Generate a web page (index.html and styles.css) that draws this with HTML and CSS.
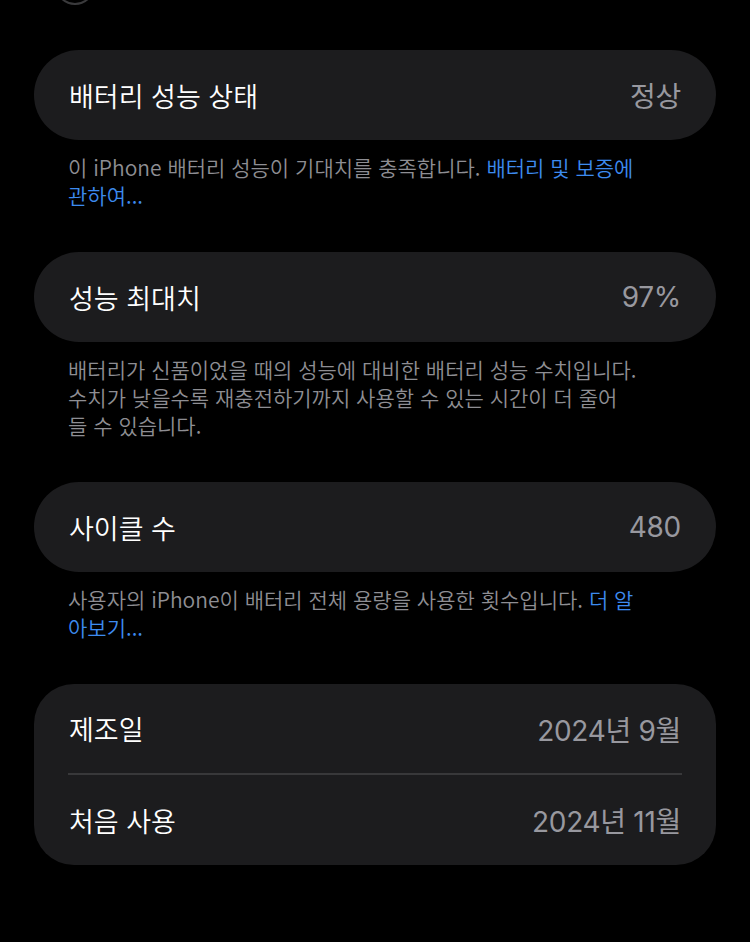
FILE: index.html
```html
<!DOCTYPE html>
<html lang="ko">
<head>
<meta charset="utf-8">
<link rel="stylesheet" href="styles.css">
</head>
<body>
<div class="page">
  <div class="top"><div class="top-circle"></div></div>

  <div class="card">
    <div class="row"><span class="label">배터리 성능 상태</span><span class="value">정상</span></div>
  </div>
  <p class="note">이 iPhone 배터리 성능이 기대치를 충족합니다. <span class="link">배터리 및 보증에<br>관하여...</span></p>

  <div class="card">
    <div class="row"><span class="label">성능 최대치</span><span class="value">97%</span></div>
  </div>
  <p class="note">배터리가 신품이었을 때의 성능에 대비한 배터리 성능 수치입니다.<br>수치가 낮을수록 재충전하기까지 사용할 수 있는 시간이 더 줄어<br>들 수 있습니다.</p>

  <div class="card">
    <div class="row"><span class="label">사이클 수</span><span class="value">480</span></div>
  </div>
  <p class="note">사용자의 iPhone이 배터리 전체 용량을 사용한 횟수입니다. <span class="link">더 알<br>아보기...</span></p>

  <div class="card card-group">
    <div class="row"><span class="label">제조일</span><span class="value">2024년 9월</span></div>
    <div class="divider"></div>
    <div class="row"><span class="label">처음 사용</span><span class="value">2024년 11월</span></div>
  </div>
</div>
</body>
</html>
```

FILE: styles.css
```css
html, body {
  margin: 0;
  padding: 0;
  background: #000;
}
body {
  font-family: "Noto Sans CJK KR", "Noto Sans", sans-serif;
  font-weight: 350;
  color: #fff;
  width: 750px;
  height: 942px;
  overflow: hidden;
}
.page {
  padding: 0 34px;
}
.top {
  height: 50px;
  overflow: hidden;
}
.top-circle {
  width: 36px;
  height: 36px;
  margin-top: -35px;
  margin-left: 21px;
  border-radius: 50%;
  border: 2px solid #3a3a3c;
}
.card {
  background: #1c1c1e;
  border-radius: 45px;
}
.card-group {
  border-radius: 40px;
}
.row {
  height: 90px;
  display: flex;
  align-items: center;
  justify-content: space-between;
  padding: 0 35px;
}
.label {
  font-size: 27px;
  color: #fff;
}
.value {
  font-family: "Inter", "Noto Sans CJK KR", sans-serif;
  font-size: 28px;
  font-weight: 400;
  letter-spacing: -0.3px;
  color: #98989f;
}
.divider {
  height: 2px;
  background: #38383a;
  margin: 0 34px;
}
.card-group .row:first-child {
  height: 89px;
}
.note {
  margin: 13px 0 43px;
  padding: 0 10px 0 34px;
  font-size: 21px;
  line-height: 28px;
  color: #8e8e93;
  white-space: nowrap;
}
.link {
  color: #3d8bef;
}
```
